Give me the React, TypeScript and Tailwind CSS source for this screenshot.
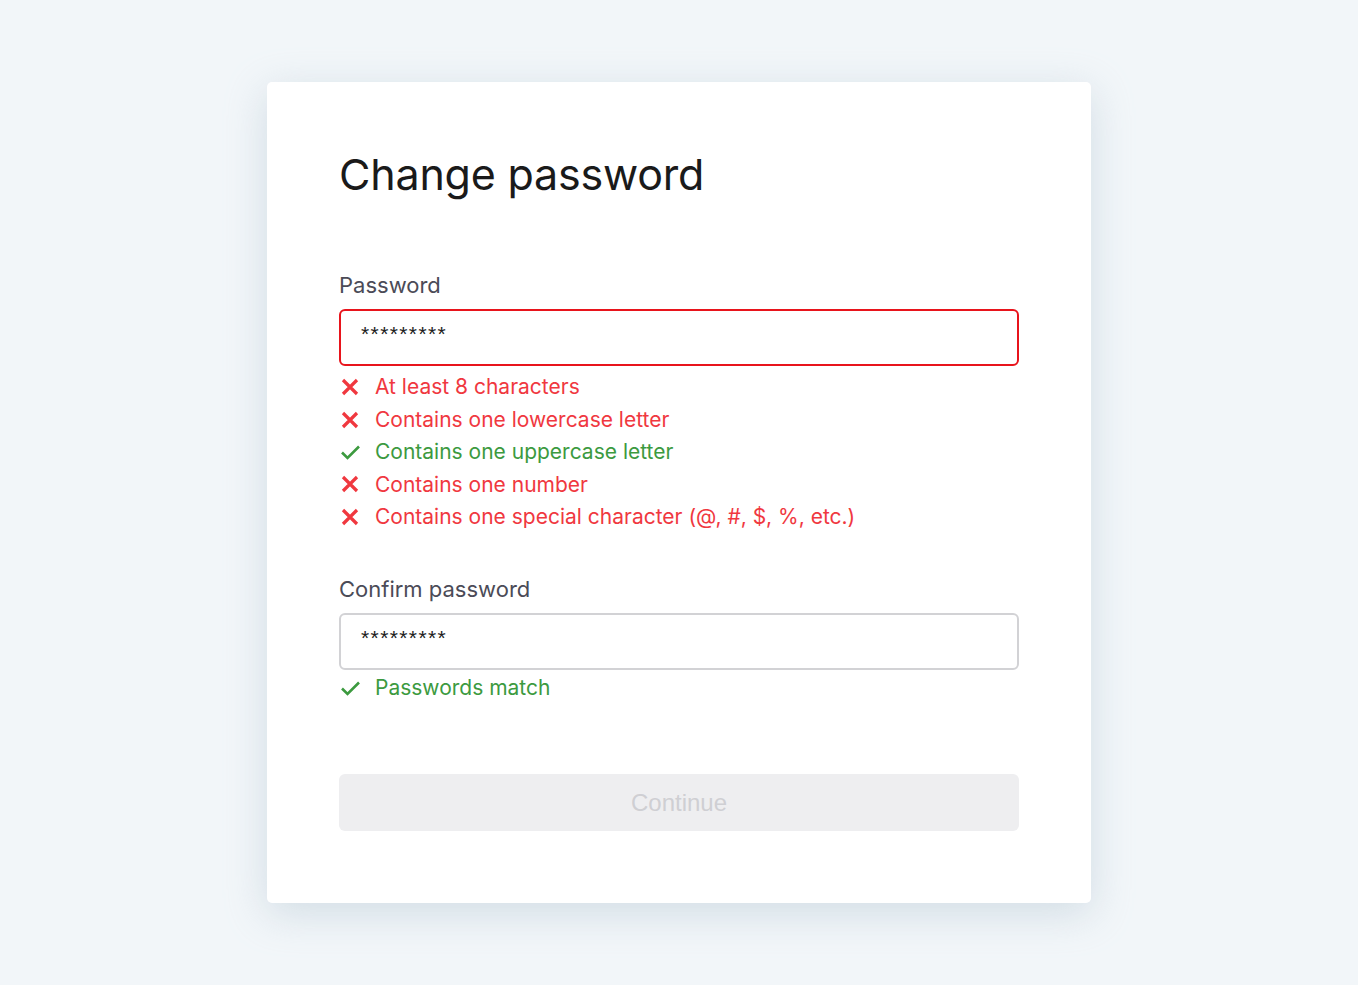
import React from "react";

type Rule = { text: string; ok: boolean };

const rules: Rule[] = [
  { text: "At least 8 characters", ok: false },
  { text: "Contains one lowercase letter", ok: false },
  { text: "Contains one uppercase letter", ok: true },
  { text: "Contains one number", ok: false },
  { text: "Contains one special character (@, #, $, %, etc.)", ok: false },
];

function CrossIcon() {
  return (
    <svg width="20" height="20" viewBox="0 0 20 20" className="shrink-0">
      <path d="M3 3 L17 17 M17 3 L3 17" stroke="#f0383f" strokeWidth="3.2" strokeLinecap="butt" />
    </svg>
  );
}

function CheckIcon() {
  return (
    <svg width="22" height="18" viewBox="0 0 22 18" className="shrink-0">
      <path d="M2 9.5 L7.5 15 L19 3.5" stroke="#3c9a3f" strokeWidth="2.6" fill="none" />
    </svg>
  );
}

function RuleRow({ text, ok }: Rule) {
  return (
    <li className={`flex h-[32.4px] items-center ${ok ? "text-[#3c9a3f]" : "text-[#f0383f]"}`}>
      <span className="flex w-[36px] items-center pl-[1px]">{ok ? <CheckIcon /> : <CrossIcon />}</span>
      <span>{text}</span>
    </li>
  );
}

function Field({ label, invalid }: { label: string; invalid?: boolean }) {
  return (
    <div>
      <label className="block text-[22px] leading-[30px] text-[#4b4b57]">{label}</label>
      <div
        className={`mt-[9px] flex h-[57px] items-center rounded-[6px] border-2 bg-white px-[20px] ${
          invalid ? "border-[#e8141c]" : "border-[#d2d2d5]"
        }`}
      >
        <span
          className="-mt-[8px] text-[21px] tracking-[1.4px] text-[#1c1c1c]"
          style={{ fontFamily: "Arial, 'Liberation Sans', sans-serif" }}
        >
          *********
        </span>
      </div>
    </div>
  );
}

export default function App() {
  return (
    <div
      className="flex min-h-[985px] items-start justify-center bg-[#f2f6f9] pt-[82px]"
      style={{ fontFamily: "Inter, 'Noto Sans', sans-serif" }}
    >
      <div className="w-[824px] rounded-[5px] bg-white px-[72px] pt-[62px] pb-[72px] shadow-[0_10px_40px_rgba(170,190,205,0.45)]">
        <h1 className="text-[43px] font-normal leading-[60px] tracking-[-0.2px] text-[#1a1a1a]">Change password</h1>

        <div className="mt-[66px]">
          <Field label="Password" invalid />
          <ul className="mt-[5px] text-[21px]">
            {rules.map((r) => (
              <RuleRow key={r.text} {...r} />
            ))}
          </ul>
        </div>

        <div className="mt-[41px]">
          <Field label="Confirm password" />
          <ul className="mt-[2px] text-[21px]">
            <RuleRow text="Passwords match" ok />
          </ul>
        </div>

        <button
          type="button"
          disabled
          className="mt-[70px] flex h-[57px] w-full items-center justify-center rounded-[6px] bg-[#eeeef0] text-[24px] text-[#cfcfd3]"
          style={{ fontFamily: "'Liberation Sans', Arial, sans-serif" }}
        >
          Continue
        </button>
      </div>
    </div>
  );
}
